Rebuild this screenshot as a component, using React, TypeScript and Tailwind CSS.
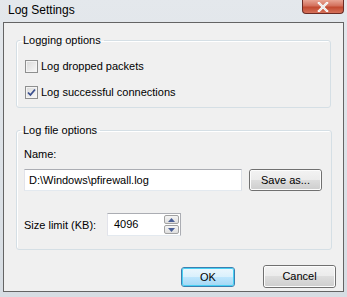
import React from 'react';

const Checkbox: React.FC<{ checked?: boolean }> = ({ checked }) => (
  <span className="flex h-[13px] w-[13px] shrink-0 items-center justify-center border border-[#8e8f8f] bg-white">
    <span className="relative flex h-[11px] w-[11px] items-center justify-center border border-[#f4f4f4] bg-gradient-to-br from-[#dcdcdc] to-[#f6f6f6]">
      {checked && (
        <svg width="9" height="9" viewBox="0 0 9 9" className="absolute">
          <path d="M1 4.5 L3.4 7 L8 1.5" fill="none" stroke="#3a4f8e" strokeWidth="1.8" />
        </svg>
      )}
    </span>
  </span>
);

const Button: React.FC<{ label: string; primary?: boolean; className?: string }> = ({ label, primary, className }) => (
  <button
    type="button"
    className={`flex items-center justify-center rounded-[3px] border ${
      primary ? 'border-[#3c7fb1]' : 'border-[#707070]'
    } p-0 ${className ?? ''}`}
  >
    <span
      className={`flex h-full w-full items-center justify-center rounded-[2px] border ${
        primary
          ? 'border-[#48d0f3] bg-[linear-gradient(#eaf6fd_0%,#d9f0fc_50%,#bee6fd_50%,#a7d9f5_100%)]'
          : 'border-[#fcfcfc] bg-[linear-gradient(#f2f2f2_0%,#ebebeb_50%,#dddddd_50%,#cfcfcf_100%)]'
      }`}
    >
      {label}
    </span>
  </button>
);

const Group: React.FC<{ title: string; className?: string; children: React.ReactNode }> = ({ title, className, children }) => (
  <fieldset className={`mx-[12px] rounded-[3px] border border-[#d5dfe5] shadow-[inset_1px_1px_0_#ffffff] ${className ?? ''}`}>
    <legend className="ml-[3px] px-[3px] leading-[14px]">{title}</legend>
    {children}
  </fieldset>
);

const App: React.FC = () => {
  return (
    <div
      className="flex h-[297px] w-[347px] flex-col bg-gradient-to-b from-[#e4e8ec] to-[#d7dde3] text-[11px] text-black"
      style={{ fontFamily: '"Liberation Sans", Arial, sans-serif' }}
    >
      <div className="flex h-[22px] items-start justify-between">
        <span className="ml-[8px] mt-[3px] text-[12px] leading-[15px]">Log Settings</span>
        <div className="mr-[3px] flex h-[14px] w-[42px] items-center justify-center rounded-b-[4px] border border-t-0 border-[#6b2b24] bg-[linear-gradient(#e8a493_0%,#d3705c_45%,#c24a30_55%,#d5715a_100%)]">
          <svg width="12" height="10" viewBox="0 0 12 10">
            <path d="M2 1 L10 9 M10 1 L2 9" stroke="#ffffff" strokeWidth="2.4" strokeLinecap="square" />
            <path d="M2 1 L10 9 M10 1 L2 9" stroke="#e9e9e9" strokeWidth="1.4" />
          </svg>
        </div>
      </div>

      <div className="mx-[3px] mb-[5px] flex flex-1 flex-col border border-[#646464] bg-[#f0f0f0]">
        <Group title="Logging options" className="mt-[10px] h-[75px]">
          <div className="flex items-center gap-[3px] pl-[8px] pt-[12px]">
            <Checkbox />
            <span className="leading-[14px]">Log dropped packets</span>
          </div>
          <div className="mt-[12px] flex items-center gap-[3px] pl-[8px]">
            <Checkbox checked />
            <span className="leading-[14px]">Log successful connections</span>
          </div>
        </Group>

        <Group title="Log file options" className="mt-[15px] h-[127px]">
          <div className="pl-[7px] pr-[9px]">
            <div className="mt-[10px] leading-[14px]">Name:</div>
            <div className="mt-[8px] flex items-center">
              <div className="flex h-[22px] w-[218px] items-center border border-[#abadb3] border-b-[#e3e9ef] border-l-[#e2e3ea] border-r-[#dbdfe6] bg-white pl-[4px]">
                D:\Windows\pfirewall.log
              </div>
              <Button label="Save as..." className="ml-[7px] h-[22px] w-[73px]" />
            </div>
            <div className="mt-[22px] flex items-center">
              <span className="w-[83px] leading-[14px]">Size limit (KB):</span>
              <div className="flex h-[23px] w-[74px] border border-[#abadb3] border-b-[#e3e9ef] border-l-[#e2e3ea] bg-white">
                <span className="flex-1 pl-[6px] leading-[21px]">4096</span>
                <div className="flex w-[16px] flex-col gap-[1px] py-[1px] pr-[1px]">
                  <span className="flex flex-1 items-center justify-center rounded-[2px] border border-[#a2a2a2] bg-[linear-gradient(#f5f5f5,#dedede)]">
                    <svg width="7" height="4" viewBox="0 0 7 4">
                      <path d="M0 4 L3.5 0 L7 4 Z" fill="#4a5f97" />
                    </svg>
                  </span>
                  <span className="flex flex-1 items-center justify-center rounded-[2px] border border-[#a2a2a2] bg-[linear-gradient(#f5f5f5,#dedede)]">
                    <svg width="7" height="4" viewBox="0 0 7 4">
                      <path d="M0 0 L3.5 4 L7 0 Z" fill="#4a5f97" />
                    </svg>
                  </span>
                </div>
              </div>
            </div>
          </div>
        </Group>

        <div className="mt-[15px] flex justify-end gap-[28px] pr-[7px]">
          <Button label="OK" primary className="mt-[2px] h-[20px] w-[54px]" />
          <Button label="Cancel" className="h-[23px] w-[73px]" />
        </div>
      </div>
    </div>
  );
};

export default App;
